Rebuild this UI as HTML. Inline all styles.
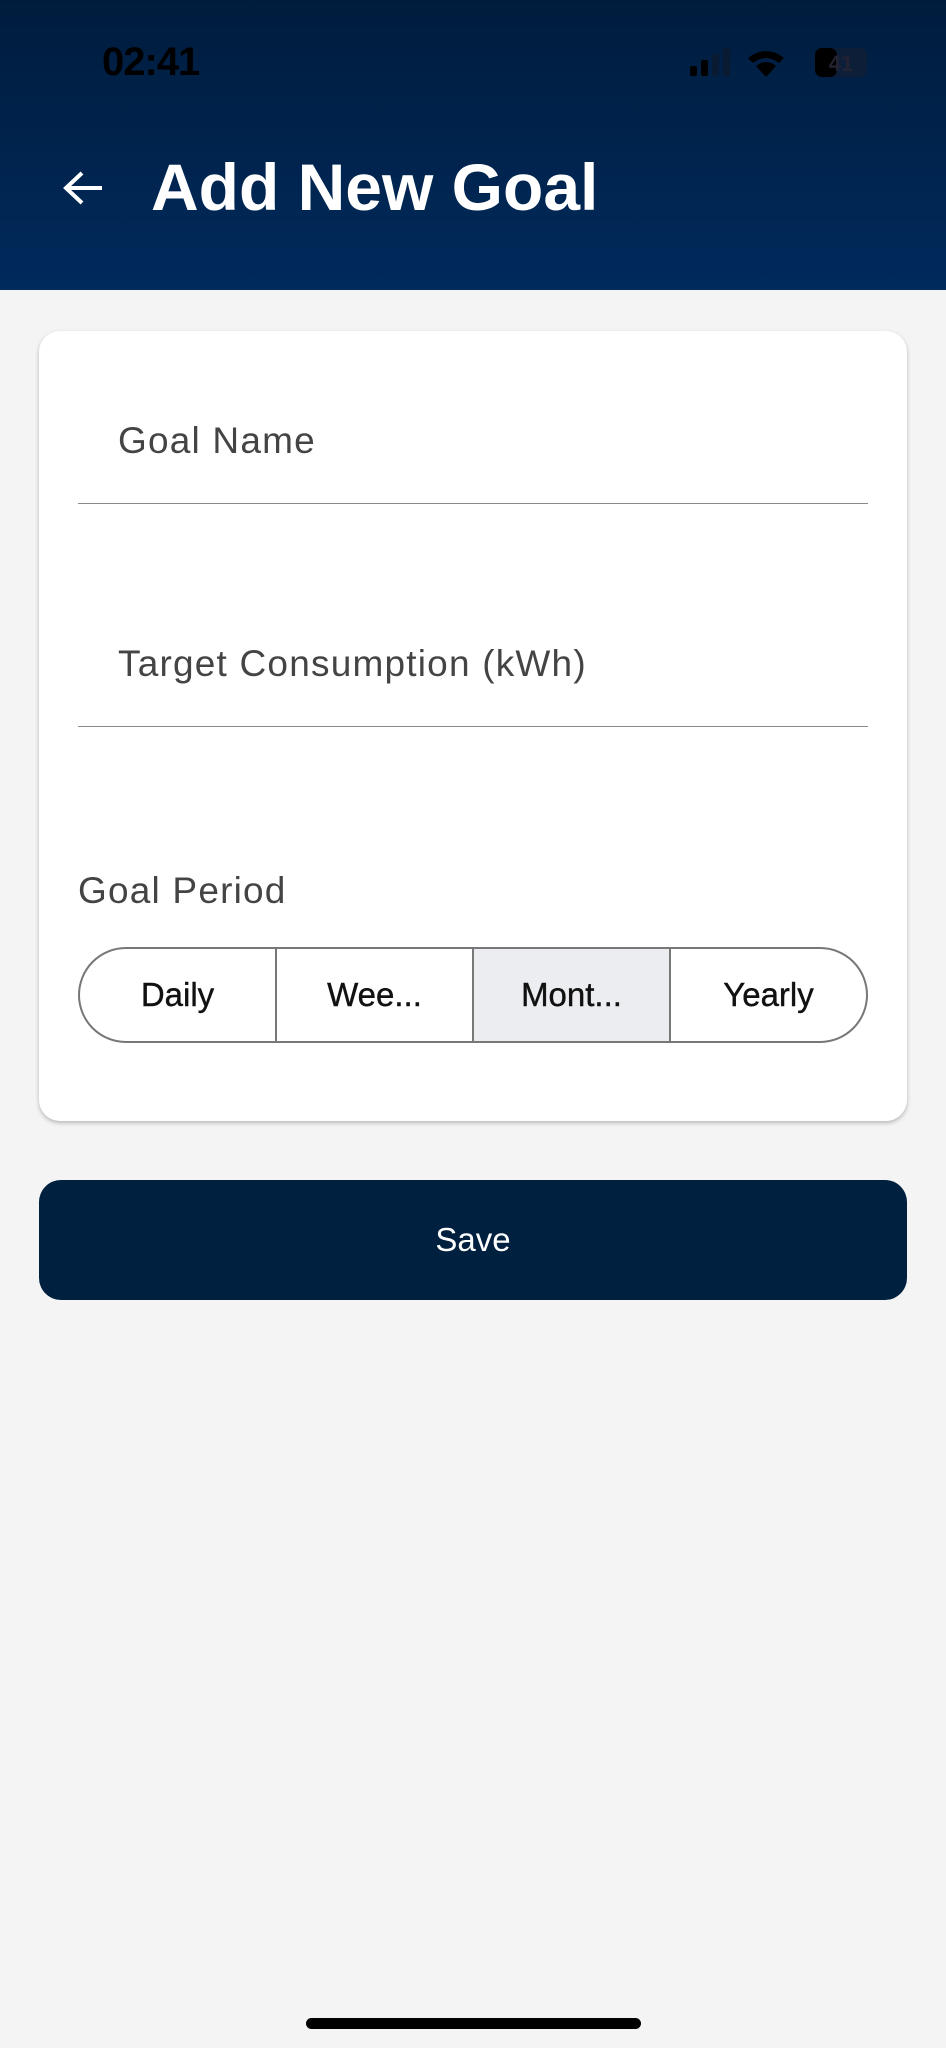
<!DOCTYPE html>
<html><head><meta charset="utf-8"><style>
*{margin:0;padding:0;box-sizing:border-box}
body{width:946px;height:2048px;background:#f4f4f4;font-family:"Liberation Sans",sans-serif;position:relative;overflow:hidden}
.hdr{position:absolute;left:0;top:0;width:946px;height:290px;background:linear-gradient(#001c3d,#002a5c)}
.time{position:absolute;left:102px;top:40px;font-size:40px;font-weight:bold;color:#000;letter-spacing:-1px}
.title{position:absolute;left:151px;top:148px;font-size:66px;font-weight:bold;color:#fff;line-height:78px}
.card{position:absolute;left:39px;top:331px;width:868px;height:790px;background:#fff;border-radius:21px;box-shadow:0 2px 4px rgba(0,0,0,.25)}
.lbl{position:absolute;font-size:37px;color:#444;letter-spacing:1.2px}
.line{position:absolute;left:39px;width:790px;height:1px;background:#8a8a8a}
.seg{position:absolute;left:39px;top:616px;width:790px;height:96px;border:2px solid #777;border-radius:48px;overflow:hidden;display:flex}
.seg div{flex:1;display:flex;align-items:center;justify-content:center;font-size:33px;color:#111;border-right:2px solid #777;-webkit-text-stroke:0.4px #111}
.seg div:last-child{border-right:none}
.save{position:absolute;left:39px;top:1180px;width:868px;height:120px;background:#00203f;border-radius:22px;color:#fff;font-size:33px;display:flex;align-items:center;justify-content:center}
.home{position:absolute;left:306px;top:2018px;width:335px;height:11px;border-radius:6px;background:#000}
</style></head><body>
<div class="hdr">
<div class="time">02:41</div>
<svg style="position:absolute;left:690px;top:48px" width="200" height="32">
<rect x="0" y="18" width="7" height="10" rx="2" fill="#000"/><rect x="11" y="12" width="7" height="16" rx="2" fill="#000"/><rect x="22" y="6" width="7" height="22" rx="2" fill="#0a1a30"/><rect x="33" y="0" width="7" height="28" rx="2" fill="#0a1a30"/>
<path d="M58 10 Q76 -4 94 10 L89 15 Q76 5 63 15Z M66 18 Q76 10 86 18 L76 29Z" fill="#000"/>
<rect x="125" y="0" width="52" height="29" rx="7" fill="#0c1e38"/><rect x="125" y="0" width="22" height="29" rx="7" fill="#000"/>
<text x="151" y="23" font-size="22" font-weight="bold" text-anchor="middle" fill="#223">41</text>
</svg>
<svg style="position:absolute;left:62px;top:170px" width="42" height="36"><path d="M40 18H4M20 3L4 18L20 33" stroke="#fff" stroke-width="4" fill="none"/></svg>
<div class="title">Add New Goal</div>
</div>
<div class="card">
<div class="lbl" style="left:79px;top:89px">Goal Name</div>
<div class="line" style="top:172px"></div>
<div class="lbl" style="left:79px;top:312px">Target Consumption (kWh)</div>
<div class="line" style="top:395px"></div>
<div class="lbl" style="left:39px;top:539px">Goal Period</div>
<div class="seg"><div>Daily</div><div>Wee...</div><div style="background:#ecedf1">Mont...</div><div>Yearly</div></div>
</div>
<div class="save">Save</div>
<div class="home"></div>
</body></html>
